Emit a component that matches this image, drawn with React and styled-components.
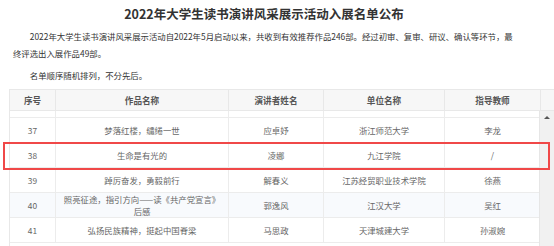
import styled, { createGlobalStyle } from 'styled-components';

const GlobalStyle = createGlobalStyle`
    html, body {
        margin: 0;
        padding: 0;
        background: #fff;
    }
    body {
        font-family: "Noto Sans CJK SC", "Noto Sans", sans-serif;
        color: #333;
    }
`

const COLS = '45px 173px 95px 121px 96px'

const Page = styled.div`
    width: 554px;
    height: 246px;
    overflow: hidden;
    box-sizing: border-box;
`
const Title = styled.h2`
    margin: 0;
    padding: 5px 26px 0 0;
    height: 23px;
    text-align: center;
    font-size: 12.5px;
    line-height: 18px;
    font-weight: 700;
    color: #333;
`
const Intro = styled.div`
    padding: 0 34px 0 13px;
    font-size: 8.4px;
    color: #333;
`
const Para = styled.p`
    margin: 0 0 5px;
    line-height: 17px;
    text-indent: 2em;
`
const TableWrap = styled.div`
    position: relative;
    margin: 2px 0 0 9px;
    width: 545px;
`
const Head = styled.div`
    display: grid;
    grid-template-columns: ${COLS} 15px;
    height: 22px;
    background: #f7f7f7;
    border: 1px solid #e8e8e8;
    border-right: none;
    box-sizing: border-box;
`
const HeadCell = styled.div`
    display: flex;
    align-items: center;
    justify-content: center;
    font-size: 8.6px;
    font-weight: 700;
    color: #555;
    border-left: ${p => (p.$first ? 'none' : '1px solid #e8e8e8')};
`
const BodyArea = styled.div`
    display: flex;
    height: 140px;
    border-left: 1px solid #e8e8e8;
`
const Rows = styled.div`
    width: 530px;
    height: 100%;
    overflow: hidden;
`
/* the list is scrolled: only the tail of the previous row peeks out */
const RowTail = styled.div`
    display: grid;
    grid-template-columns: ${COLS};
    height: 7px;
    box-sizing: border-box;
    border-bottom: 1px solid #ececec;
    & > div {
        border-left: 1px solid #ececec;
    }
    & > div:first-child {
        border-left: none;
    }
`
const Row = styled.div`
    display: grid;
    grid-template-columns: ${COLS};
    height: 25px;
    box-sizing: border-box;
    border-bottom: 1px solid #ececec;
    background: ${p => (p.$shade ? '#f8fafd' : '#fff')};
`
const Cell = styled.div`
    display: flex;
    align-items: center;
    justify-content: center;
    text-align: center;
    padding: 0 4px;
    font-size: 8.4px;
    line-height: 12px;
    color: #666;
    border-left: ${p => (p.$first ? 'none' : '1px solid #ececec')};
`
const ScrollTrack = styled.div`
    width: 15px;
    flex: none;
    background: #f1f1f1;
    border-left: 1px solid #e6e6e6;
    box-sizing: border-box;
`
const UpArrow = styled.span`
    display: block;
    margin: 5px auto 0;
    width: 0;
    height: 0;
    border-left: 3px solid transparent;
    border-right: 3px solid transparent;
    border-bottom: 3px solid #555;
`
const Highlight = styled.div`
    position: absolute;
    left: -6px;
    top: 53px;
    width: 547px;
    height: 28px;
    border: 2px solid #f04848;
    box-sizing: border-box;
    pointer-events: none;
`

const headers = ['序号', '作品名称', '演讲者姓名', '单位名称', '指导教师']

const records = [
    { no: 37, work: '梦落红楼，缱绻一世', speaker: '应卓妤', unit: '浙江师范大学', teacher: '李龙' },
    { no: 38, work: '生命是有光的', speaker: '凌娜', unit: '九江学院', teacher: '/' },
    { no: 39, work: '踔厉奋发，勇毅前行', speaker: '解春义', unit: '江苏经贸职业技术学院', teacher: '徐燕' },
    { no: 40, work: '照亮征途，指引方向——读《共产党宣言》后感', speaker: '郭逸风', unit: '江汉大学', teacher: '吴红', shade: true },
    { no: 41, work: '弘扬民族精神，挺起中国脊梁', speaker: '马思政', unit: '天津城建大学', teacher: '孙淑婉' },
]

const App = () => {
    return (
        <>
            <GlobalStyle />
            <Page>
                <Title>2022年大学生读书演讲风采展示活动入展名单公布</Title>
                <Intro>
                    <Para>2022年大学生读书演讲风采展示活动自2022年5月启动以来，共收到有效推荐作品246部。经过初审、复审、研议、确认等环节，最终评选出入展作品49部。</Para>
                    <Para>名单顺序随机排列，不分先后。</Para>
                </Intro>
                <TableWrap>
                    <Head>
                        {headers.map((h, i) => (
                            <HeadCell key={h} $first={i === 0}>{h}</HeadCell>
                        ))}
                        <HeadCell />
                    </Head>
                    <BodyArea>
                        <Rows>
                            <RowTail>
                                {headers.map(h => <div key={h} />)}
                            </RowTail>
                            {records.map(r => (
                                <Row key={r.no} $shade={r.shade}>
                                    <Cell $first>{r.no}</Cell>
                                    <Cell>{r.work}</Cell>
                                    <Cell>{r.speaker}</Cell>
                                    <Cell>{r.unit}</Cell>
                                    <Cell>{r.teacher}</Cell>
                                </Row>
                            ))}
                        </Rows>
                        <ScrollTrack>
                            <UpArrow />
                        </ScrollTrack>
                    </BodyArea>
                    <Highlight />
                </TableWrap>
            </Page>
        </>
    );
}

export default App;
